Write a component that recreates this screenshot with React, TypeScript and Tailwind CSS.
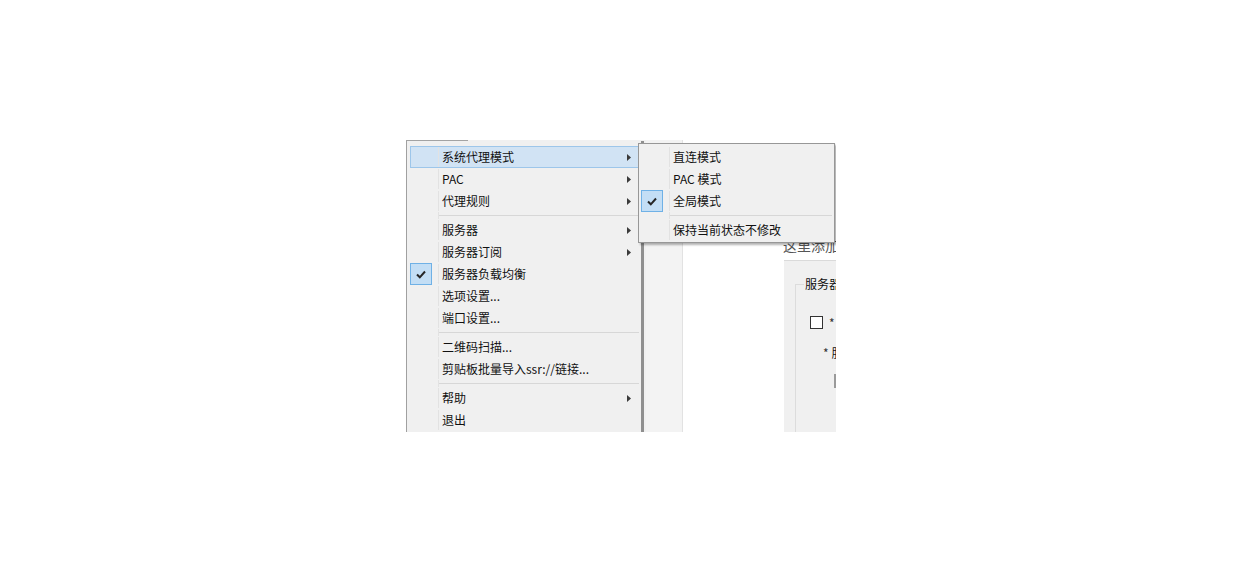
import React from 'react'

type Item =
  | { sep: true }
  | { sep?: false; label: string; sub?: boolean; checked?: boolean; active?: boolean }

const mainItems: Item[] = [
  { label: '系统代理模式', sub: true, active: true },
  { label: 'PAC', sub: true },
  { label: '代理规则', sub: true },
  { sep: true },
  { label: '服务器', sub: true },
  { label: '服务器订阅', sub: true },
  { label: '服务器负载均衡', checked: true },
  { label: '选项设置...' },
  { label: '端口设置...' },
  { sep: true },
  { label: '二维码扫描...' },
  { label: '剪贴板批量导入ssr://链接...' },
  { sep: true },
  { label: '帮助', sub: true },
  { label: '退出' },
]

const subItems: Item[] = [
  { label: '直连模式' },
  { label: 'PAC 模式' },
  { label: '全局模式', checked: true },
  { sep: true },
  { label: '保持当前状态不修改' },
]

const font = { fontFamily: '"Noto Sans CJK SC", "Liberation Sans", sans-serif' }

function Check() {
  return (
    <svg width="10" height="9" viewBox="0 0 10 9">
      <path d="M1 4.5 L3.8 7.3 L9 1.5" fill="none" stroke="#262626" strokeWidth="2" />
    </svg>
  )
}

function Arrow() {
  return (
    <svg width="4" height="7" viewBox="0 0 4 7">
      <polygon points="0,0 4,3.5 0,7" fill="#3a3a3a" />
    </svg>
  )
}

function MenuRow({ item }: { item: Item }) {
  if (item.sep) {
    return (
      <div className="flex h-[7px]">
        <div className="w-[28px]" />
        <div className="w-px bg-[#e2e2e2]" />
        <div className="flex flex-1 items-center">
          <div className="h-px w-full bg-[#d7d7d7]" />
        </div>
      </div>
    )
  }
  return (
    <div
      className={
        'flex h-[22px] items-stretch border ' +
        (item.active ? 'bg-[#d1e3f4] border-[#9dc6ea]' : 'border-transparent')
      }
    >
      <div className="flex w-[27px] items-stretch">
        {item.checked ? (
          <div className="-my-px -ml-px flex w-[22px] items-center justify-center border border-[#6fb1e6] bg-[#c3def5]">
            <Check />
          </div>
        ) : null}
      </div>
      <div className="w-px bg-[#e2e2e2]" />
      <div className="ml-[3px] flex flex-1 items-center text-[12px] leading-none text-[#111]">
        {item.label}
      </div>
      {item.sub ? (
        <div className="mr-[7px] flex items-center">
          <Arrow />
        </div>
      ) : null}
    </div>
  )
}

export default function App() {
  return (
    <div className="h-[572px] w-[1244px] bg-white" style={font}>
      <div className="pl-[406px] pt-[140px]">
        <div className="relative h-[292px] w-[430px] overflow-hidden">
          {/* window behind the menus */}
          <div className="flex h-full">
            <div className="w-[240px] shrink-0 bg-[#f0f0f0]" />
            <div className="w-[37px] shrink-0 border-r border-[#e2e2e2] bg-[#f3f3f3]" />
            <div className="flex min-w-0 flex-1 flex-col overflow-hidden bg-white">
              <div className="h-[120px] shrink-0 pl-[100px] pt-[95px]">
                <div className="whitespace-nowrap text-[14px] leading-[20px] text-[#555]">这里添加</div>
              </div>
              <div className="flex flex-1">
                <div className="w-[101px] shrink-0 bg-white" />
                <div className="min-w-0 flex-1 overflow-hidden border-t border-[#dadada] bg-[#f0f0f0] pl-[11px] pt-[14px]">
                  <fieldset className="w-[200px] border-l border-t border-[#dcdcdc] pb-[60px]">
                    <legend className="ml-[8px] whitespace-nowrap px-[1px] text-[12px] leading-[18px] text-[#111]">
                      服务器
                    </legend>
                    <div className="mt-[23px] flex items-center pl-[14px]">
                      <div className="h-[13px] w-[13px] border border-[#333] bg-white" />
                      <span className="ml-[6px] text-[12px] leading-none text-[#333]">*</span>
                    </div>
                    <div className="mt-[18px] flex items-center whitespace-nowrap pl-[27px] text-[12px] leading-none text-[#111]">
                      <span className="text-[#333]">*</span>
                      <span className="ml-[3px]">服务器</span>
                    </div>
                    <div className="ml-[38px] mt-[15px] h-[14px] w-[2px] bg-[#9a9a9a]" />
                  </fieldset>
                </div>
              </div>
            </div>
          </div>

          {/* dark strip at top */}
          <div className="absolute left-0 top-0 h-[2px] w-[62px] bg-[#a3a3a3]" />

          {/* main context menu */}
          <div className="absolute left-0 top-[1px] h-[320px] w-[238px] border-l border-r-[3px] border-l-[#a0a0a0] border-r-[#8f8f8f] bg-[#f0f0f0] pl-[3px] pr-[2px] pt-[5px]">
            {mainItems.map((it, i) => (
              <MenuRow key={i} item={it} />
            ))}
          </div>

          {/* sub menu */}
          <div className="absolute left-[232px] top-[3px] w-[197px] border border-[#979797] bg-[#f0f0f0] pb-[1px] pl-[2px] pr-[2px] pt-[2px] shadow-[2px_2px_2px_rgba(0,0,0,0.3)]">
            {subItems.map((it, i) => (
              <MenuRow key={i} item={it} />
            ))}
          </div>
        </div>
      </div>
    </div>
  )
}
